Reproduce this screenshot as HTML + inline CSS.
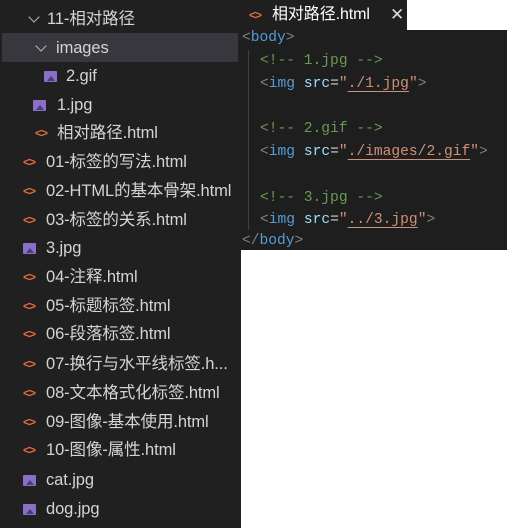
<html><head><style>
body{margin:0;width:513px;height:531px;background:#fff;position:relative;overflow:hidden;font-family:"Liberation Sans","Noto Sans CJK SC",sans-serif}
#side{position:absolute;left:0;top:0;width:241px;height:528px;background:#202020}
.r{position:absolute;height:28px;line-height:28px;font-size:16.5px;color:#d4d4d4;white-space:nowrap;letter-spacing:-0.1px}
.h{color:#e06c3c;font-size:12px;font-weight:bold;position:absolute;letter-spacing:-1px}
.im{position:absolute;width:13px;height:11px;background:#8a6fc8;border-radius:1px;top:9px}
.im:after{content:"";position:absolute;left:3px;top:5px;border-left:4px solid transparent;border-right:4px solid transparent;border-bottom:5px solid #4a3a7a}
.ch{position:absolute;width:7px;height:7px;border-right:1.5px solid #bbb;border-bottom:1.5px solid #bbb;transform:rotate(45deg);top:8px}
#tab{position:absolute;left:241px;top:0;width:166px;height:30px;background:#1f1f1f}
#code{position:absolute;left:241px;top:30px;width:266px;height:220px;background:#1e1e1e;font-family:"Liberation Mono",monospace;font-size:14.6px}
.l{position:absolute;white-space:pre;height:22px;line-height:22px}
.t{color:#569cd6}.p{color:#808080}.c{color:#6a9955}.a{color:#9cdcfe}.s{color:#ce9178;}.u{text-decoration:underline;text-decoration-color:#ce9178;text-underline-offset:4px}.w{color:#d4d4d4}
</style></head><body>
<div id="side">
<div style="position:absolute;left:2px;top:33px;width:236px;height:29px;background:#37373d"></div>
<div class="r" style="top:5px;left:30px"><span class="ch" style="left:0"></span><span style="position:absolute;left:17px">11-相对路径</span></div>
<div class="r" style="top:34px;left:37px"><span class="ch" style="left:0"></span><span style="position:absolute;left:19px">images</span></div>
<div class="r" style="top:62px;left:44px"><span class="im" style="left:0"></span><span style="position:absolute;left:22px">2.gif</span></div>
<div class="r" style="top:91px;left:33px"><span class="im" style="left:0"></span><span style="position:absolute;left:24px">1.jpg</span></div>
<div class="r" style="top:119px;left:35px"><span class="h" style="left:0">&lt;&gt;</span><span style="position:absolute;left:22px">相对路径.html</span></div>
<div class="r" style="top:148px;left:23px"><span class="h" style="left:0">&lt;&gt;</span><span style="position:absolute;left:23px">01-标签的写法.html</span></div>
<div class="r" style="top:177px;left:23px"><span class="h" style="left:0">&lt;&gt;</span><span style="position:absolute;left:23px">02-HTML的基本骨架.html</span></div>
<div class="r" style="top:206px;left:23px"><span class="h" style="left:0">&lt;&gt;</span><span style="position:absolute;left:23px">03-标签的关系.html</span></div>
<div class="r" style="top:234px;left:23px"><span class="im" style="left:0"></span><span style="position:absolute;left:23px">3.jpg</span></div>
<div class="r" style="top:263px;left:23px"><span class="h" style="left:0">&lt;&gt;</span><span style="position:absolute;left:23px">04-注释.html</span></div>
<div class="r" style="top:292px;left:23px"><span class="h" style="left:0">&lt;&gt;</span><span style="position:absolute;left:23px">05-标题标签.html</span></div>
<div class="r" style="top:320px;left:23px"><span class="h" style="left:0">&lt;&gt;</span><span style="position:absolute;left:23px">06-段落标签.html</span></div>
<div class="r" style="top:350px;left:23px"><span class="h" style="left:0">&lt;&gt;</span><span style="position:absolute;left:23px">07-换行与水平线标签.h...</span></div>
<div class="r" style="top:379px;left:23px"><span class="h" style="left:0">&lt;&gt;</span><span style="position:absolute;left:23px">08-文本格式化标签.html</span></div>
<div class="r" style="top:408px;left:23px"><span class="h" style="left:0">&lt;&gt;</span><span style="position:absolute;left:23px">09-图像-基本使用.html</span></div>
<div class="r" style="top:436px;left:23px"><span class="h" style="left:0">&lt;&gt;</span><span style="position:absolute;left:23px">10-图像-属性.html</span></div>
<div class="r" style="top:466px;left:23px"><span class="im" style="left:0"></span><span style="position:absolute;left:23px">cat.jpg</span></div>
<div class="r" style="top:495px;left:23px"><span class="im" style="left:0"></span><span style="position:absolute;left:23px">dog.jpg</span></div>
</div>
<div id="tab"><div class="r" style="top:1px;left:8px;font-size:16px"><span class="h" style="left:0">&lt;&gt;</span><span style="position:absolute;left:23px;color:#fff">相对路径.html</span><span style="position:absolute;left:141px;color:#ddd;font-size:17px">✕</span></div></div>
<div id="code">
<div style="position:absolute;left:7px;top:20px;width:1px;height:180px;background:#404040"></div>
<div class="l" style="top:-3px;left:1px"><span class="p">&lt;</span><span class="t">body</span><span class="p">&gt;</span></div>
<div class="l" style="top:20px;left:19px"><span class="c">&lt;!-- 1.jpg --&gt;</span></div>
<div class="l" style="top:43px;left:19px"><span class="p">&lt;</span><span class="t">img</span> <span class="a">src</span><span class="w">=</span><span class="s">"<span class="u">./1.jpg</span>"</span><span class="p">&gt;</span></div>
<div class="l" style="top:88px;left:19px"><span class="c">&lt;!-- 2.gif --&gt;</span></div>
<div class="l" style="top:111px;left:19px"><span class="p">&lt;</span><span class="t">img</span> <span class="a">src</span><span class="w">=</span><span class="s">"<span class="u">./images/2.gif</span>"</span><span class="p">&gt;</span></div>
<div class="l" style="top:157px;left:19px"><span class="c">&lt;!-- 3.jpg --&gt;</span></div>
<div class="l" style="top:179px;left:19px"><span class="p">&lt;</span><span class="t">img</span> <span class="a">src</span><span class="w">=</span><span class="s">"<span class="u">../3.jpg</span>"</span><span class="p">&gt;</span></div>
<div class="l" style="top:200px;left:1px"><span class="p">&lt;/</span><span class="t">body</span><span class="p">&gt;</span></div>
</div>
</body></html>
